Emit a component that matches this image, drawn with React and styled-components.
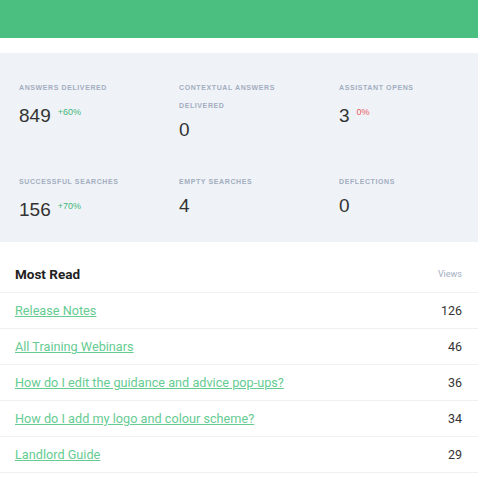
import React from 'react';
import styled, { createGlobalStyle } from 'styled-components';

const GlobalStyle = createGlobalStyle`
  body {
    margin: 0;
    background: #fff;
    font-family: Roboto, "Liberation Sans", Arial, sans-serif;
  }
`;

const Page = styled.div`
  width: 478px;
`;

const TopBar = styled.div`
  height: 38px;
  background-color: #4bbf80;
  margin-bottom: 15px;
`;

const StatsPanel = styled.div`
  background-color: #eff3f7;
  padding: 26px 0 20px 19px;
  display: grid;
  grid-template-columns: repeat(3, 140px);
  column-gap: 20px;
  row-gap: 31px;
`;

const Stat = styled.div`
  display: flex;
  flex-direction: column;
`;

const StatLabel = styled.div`
  font-family: "Liberation Sans", Arial, sans-serif;
  font-size: 7px;
  font-weight: bold;
  letter-spacing: 0.6px;
  line-height: 18px;
  text-transform: uppercase;
  color: #a3adbf;
  margin-bottom: 3px;
`;

const StatValue = styled.div`
  font-family: "Liberation Sans", Arial, sans-serif;
  font-size: 19px;
  line-height: 24px;
  color: #333;
`;

const Change = styled.sup`
  font-size: 9px;
  margin-left: 7px;
  color: ${(p) => (p.$bad ? '#ea5a5e' : '#3fb57a')};
`;

const List = styled.div`
  padding-top: 23px;
`;

const ListHeader = styled.div`
  display: flex;
  justify-content: space-between;
  align-items: center;
  padding: 0 16px 9px 15px;
  border-bottom: 1px solid #eef0f2;
`;

const ListTitle = styled.h2`
  margin: 0;
  font-size: 13.5px;
  line-height: 18px;
  font-weight: bold;
  color: #222;
`;

const ColumnHead = styled.span`
  font-size: 9px;
  color: #a3aec0;
`;

const Row = styled.div`
  display: flex;
  justify-content: space-between;
  align-items: center;
  height: 35px;
  padding: 0 16px 0 15px;
  border-bottom: 1px solid #eef0f2;
`;

const ArticleLink = styled.a`
  font-size: 12.7px;
  color: #66cc92;
  text-decoration: underline;
`;

const Count = styled.span`
  font-size: 12.5px;
  color: #333;
`;

const stats = [
  { label: 'Answers Delivered', value: 849, change: '+60%' },
  { label: 'Contextual Answers Delivered', value: 0 },
  { label: 'Assistant Opens', value: 3, change: '0%', bad: true },
  { label: 'Successful Searches', value: 156, change: '+70%' },
  { label: 'Empty Searches', value: 4 },
  { label: 'Deflections', value: 0 },
];

const articles = [
  { title: 'Release Notes', views: 126 },
  { title: 'All Training Webinars', views: 46 },
  { title: 'How do I edit the guidance and advice pop-ups?', views: 36 },
  { title: 'How do I add my logo and colour scheme?', views: 34 },
  { title: 'Landlord Guide', views: 29 },
];

const App = () => {
  return (
    <Page>
      <GlobalStyle />
      <TopBar />
      <StatsPanel>
        {stats.map((s) => (
          <Stat key={s.label}>
            <StatLabel>{s.label}</StatLabel>
            <StatValue>
              {s.value}
              {s.change && <Change $bad={s.bad}>{s.change}</Change>}
            </StatValue>
          </Stat>
        ))}
      </StatsPanel>
      <List>
        <ListHeader>
          <ListTitle>Most Read</ListTitle>
          <ColumnHead>Views</ColumnHead>
        </ListHeader>
        {articles.map((a) => (
          <Row key={a.title}>
            <ArticleLink href="#">{a.title}</ArticleLink>
            <Count>{a.views}</Count>
          </Row>
        ))}
      </List>
    </Page>
  );
};

export default App;
